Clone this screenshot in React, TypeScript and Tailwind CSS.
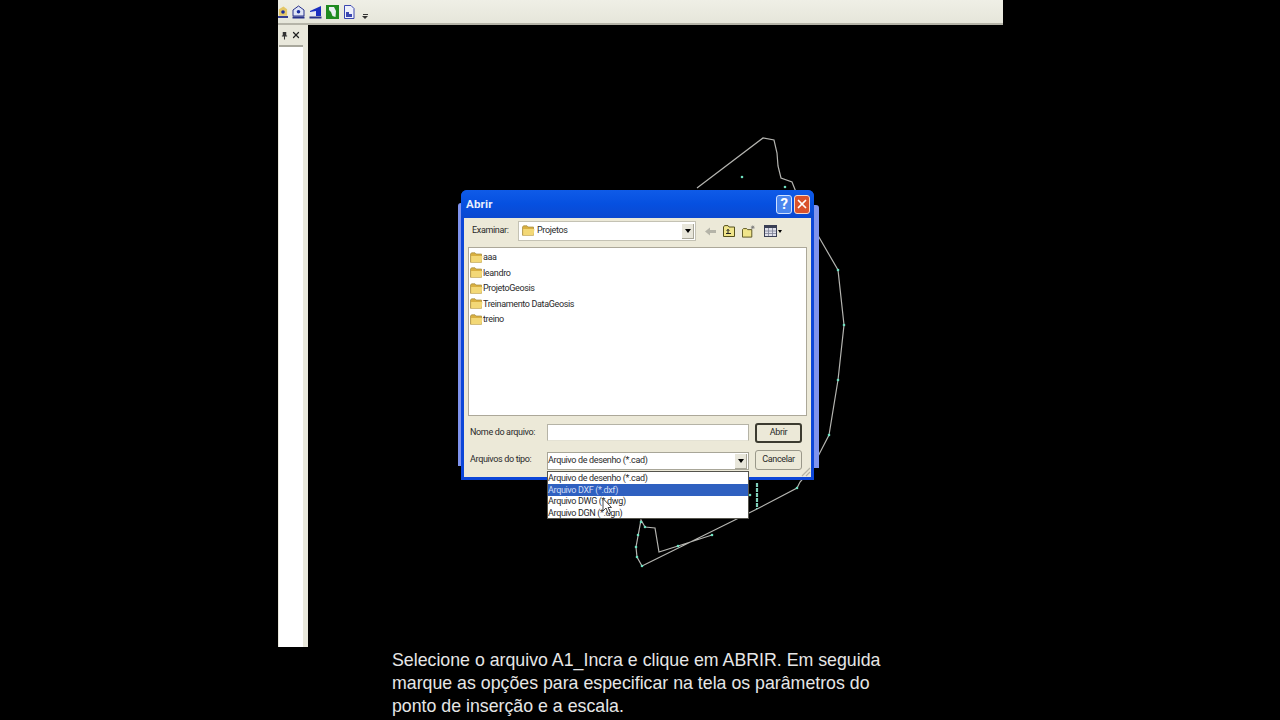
import { type FC } from "react";
import { X } from "lucide-react";

const FOLDERS = ["aaa", "leandro", "ProjetoGeosis", "Treinamento DataGeosis", "treino"];
const FILE_TYPES = ["Arquivo de desenho (*.cad)", "Arquivo DXF (*.dxf)", "Arquivo DWG (*.dwg)", "Arquivo DGN (*.dgn)"];

const LINES = [
    "697,188 763,138 774,140 777,153 778,166 781,178 792,182 796,192",
    "816,232 838,270 844,325 838,380 829,435 812,468 800,482 797,488 757,509 642,566 637,557 636,547 641,520 645,527 655,528 659,552 678,546 712,535",
];
const DOTS = [
    [742, 177],
    [785, 187],
    [838, 270],
    [844, 325],
    [838, 380],
    [829, 435],
    [797, 488],
    [750, 495],
    [642, 566],
    [637, 557],
    [636, 547],
    [638, 535],
    [641, 522],
    [645, 527],
    [678, 546],
    [712, 535],
];

const Folder: FC<{ className?: string }> = ({ className }) => (
    <svg viewBox="0 0 13 11" className={className}>
        <path d="M0.5 2 L1.5 0.8 H5 L6 2 H11.5 V10.3 H0.5 Z" fill="#d9b041" stroke="#a58a3c" strokeWidth="0.7" />
        <path d="M1.2 4 H12.5 L11.5 10.2 H1.2 Z" fill="#f3d877" />
    </svg>
);

const ComboArrow: FC = () => (
    <div className="w-[12px] h-[15px] bg-[#e8e6da] border-r border-b border-[#a8a698] flex items-center justify-center">
        <div className="w-0 h-0 border-x-[3px] border-x-transparent border-t-[4px] border-t-black" />
    </div>
);

const Toolbar: FC = () => (
    <div className="h-[25px] shrink-0 flex items-center gap-[4px] bg-gradient-to-b from-[#efefe6] to-[#e6e6da] border-b-2 border-[#b5b4a8] overflow-hidden">
        <svg viewBox="0 0 11 14" className="w-[10px] h-[14px]">
            <path d="M1 11 V4 L6 1 L10 4 V11 Z" fill="#e4c766" />
            <circle cx="5.5" cy="7" r="2" fill="#1b2f9e" />
            <rect x="0" y="11.5" width="11" height="2" fill="#26308a" />
        </svg>
        <svg viewBox="0 0 13 14" className="w-[13px] h-[14px]">
            <path d="M1 11 V5 L6.5 1 L12 5 V11 Z" fill="#dfe4f5" stroke="#26308a" />
            <circle cx="6.5" cy="6.8" r="1.8" fill="#1b2f9e" />
            <rect x="0.5" y="11.5" width="12" height="2" fill="#26308a" />
        </svg>
        <svg viewBox="0 0 13 14" className="w-[13px] h-[14px]">
            <path d="M1 11 V6 L12 1 V11 Z" fill="#1b2fc0" />
            <path d="M1 7 L7 6 V11 H1 Z" fill="#e4e6f2" />
            <rect x="0.5" y="11.5" width="12" height="2" fill="#26308a" />
        </svg>
        <svg viewBox="0 0 13 14" className="w-[13px] h-[14px]">
            <rect width="13" height="14" fill="#1f8a1f" />
            <path d="M3 2 H8 L10 6 L9.5 12 L6.5 11 L5 7 L3 5 Z" fill="#e9eef2" />
        </svg>
        <svg viewBox="0 0 12 14" className="w-[12px] h-[14px]">
            <path d="M1.5 0.5 H8 L11 3.5 V13.5 H1.5 Z" fill="#eef0fb" stroke="#3a46b0" />
            <path d="M3 7 H6 V9 H9 V12 H3 Z" fill="#3a46b0" />
        </svg>
        <div className="ml-[3px] mt-[10px] flex flex-col items-center gap-[1px]">
            <div className="w-[5px] h-[1px] bg-[#333]" />
            <div className="w-0 h-0 border-x-[3px] border-x-transparent border-t-[3px] border-t-[#333]" />
        </div>
    </div>
);

const SidePanel: FC = () => (
    <div className="w-[30px] shrink-0 flex flex-col bg-[#e9e8dc]">
        <div className="h-[20px] shrink-0 flex items-center gap-[3px] pl-[3px]">
            <svg viewBox="0 0 8 10" className="w-[7px] h-[9px]">
                <path d="M2 1 H6 V5 H7 V6 H4.6 V9.5 H3.4 V6 H1 V5 H2 Z" fill="#333" />
            </svg>
            <X className="w-[10px] h-[10px] text-[#222]" strokeWidth={3} />
        </div>
        <div className="flex-1 flex">
            <div className="ml-[1px] w-[24px] bg-white border-t-2 border-[#a9a89d]" />
        </div>
    </div>
);

const Dialog: FC = () => (
    <div className="absolute left-[153px] top-[165px] w-[353px] h-[290px] font-['Roboto',sans-serif] text-[9px] tracking-[-0.35px] text-[#2a2a2a]">
        <div className="absolute -left-[3px] top-[13px] w-[6px] h-[263px] rounded-tl-[3px] bg-[#7f93ee]" />
        <div className="absolute -right-[5px] top-[15px] w-[8px] h-[263px] rounded-tr-[3px] bg-[#7f93ee]" />
        <div className="relative h-full flex flex-col rounded-t-[6px] bg-[#0c46d8] overflow-visible">
            <div className="h-[28px] shrink-0 flex items-center justify-between pl-[5px] pr-[4px] rounded-t-[6px] bg-gradient-to-b from-[#0f5be8] via-[#0650e0] to-[#0a48d0]">
                <span className="mt-[2px] text-[11.5px] font-bold tracking-[0.2px] text-[#e8eefc]">Abrir</span>
                <div className="flex items-center gap-[2px]">
                    <div className="w-[16px] h-[19px] rounded-[3px] border border-[#cfe0ff] bg-[#4a86ee] flex items-center justify-center text-[15px] font-bold text-white">
                        ?
                    </div>
                    <div className="w-[16px] h-[19px] rounded-[3px] border border-[#f3d8cc] bg-[#d9522c] flex items-center justify-center">
                        <X className="w-[14px] h-[14px] text-white" strokeWidth={3} />
                    </div>
                </div>
            </div>
            <div className="relative flex-1 mx-[3px] mb-[3px] bg-[#ece9d8] px-[4px] pt-[3px] flex flex-col">
                <div className="flex items-center h-[20px]">
                    <span className="w-[50px] pl-[4px] whitespace-nowrap">Examinar:</span>
                    <div className="w-[178px] h-[20px] flex items-center justify-between bg-white border border-[#c4c2b4] pl-[3px] pr-[1px]">
                        <div className="flex items-center gap-[2px]">
                            <Folder className="w-[13px] h-[11px] -mt-[1px]" />
                            <span>Projetos</span>
                        </div>
                        <ComboArrow />
                    </div>
                    <div className="ml-[9px] flex items-center gap-[7px]">
                        <svg viewBox="0 0 11 9" className="w-[11px] h-[9px]">
                            <path d="M0 4.5 L5 0.5 V3 H11 V6 H5 V8.5 Z" fill="#b5b4a8" />
                        </svg>
                        <svg viewBox="0 0 12 12" className="w-[12px] h-[12px]">
                            <path d="M0.5 2 L1.5 0.6 H5 L6 2 H11.5 V11.5 H0.5 Z" fill="#f0e58a" stroke="#55501c" />
                            <path d="M3 8.5 H8 M5 8.5 V4.5 M3.7 5.8 L5 4.3 L6.3 5.8" stroke="#222" fill="none" />
                        </svg>
                        <svg viewBox="0 0 15 13" className="w-[14px] h-[13px]">
                            <path d="M0.5 4.5 L1.5 3.4 H5 L6 4.5 H10.5 V12.5 H0.5 Z" fill="#f0e58a" stroke="#55501c" />
                            <path d="M11.5 0 V4 M9.5 2 H13.5 M10 0.5 L13 3.5 M13 0.5 L10 3.5" stroke="#777" strokeWidth="0.8" />
                        </svg>
                        <div className="flex items-center gap-[1px] ml-[1px]">
                            <svg viewBox="0 0 13 12" className="w-[13px] h-[12px]">
                                <rect x="0.5" y="0.5" width="12" height="11" fill="#dfe0ea" stroke="#3a3f55" />
                                <rect x="0.5" y="0.5" width="12" height="2.5" fill="#3a3f55" />
                                <path d="M4.5 3 V11 M8.5 3 V11 M1 6 H12 M1 8.5 H12" stroke="#7b8095" strokeWidth="0.8" />
                            </svg>
                            <div className="w-0 h-0 border-x-[2.5px] border-x-transparent border-t-[3px] border-t-black" />
                        </div>
                    </div>
                </div>
                <div className="mt-[6px] h-[169px] w-[339px] bg-white border border-[#aca899] pt-[2px] pl-[1px] flex flex-col">
                    {FOLDERS.map((name) => (
                        <div key={name} className="h-[15.5px] flex items-center">
                            <Folder className="w-[13px] h-[11px] -mt-[1px]" />
                            <span>{name}</span>
                        </div>
                    ))}
                </div>
                <div className="mt-[7px] flex items-center h-[20px]">
                    <span className="w-[79px] pl-[2px] whitespace-nowrap">Nome do arquivo:</span>
                    <div className="w-[202px] h-[17px] -mt-[1px] bg-white border border-[#b5b3a6] border-b-[#e4e2d4]" />
                    <button className="ml-[6px] w-[47px] h-[20px] rounded-[3px] border-2 border-[#3c3b30] bg-[#ece9d8]">Abrir</button>
                </div>
                <div className="mt-[7px] flex items-center h-[20px]">
                    <span className="w-[79px] pl-[2px] whitespace-nowrap">Arquivos do tipo:</span>
                    <div className="w-[202px] h-[18px] mt-[2px] flex items-center justify-between bg-white border border-[#a8a698] pr-[1px]">
                        <span>{FILE_TYPES[0]}</span>
                        <ComboArrow />
                    </div>
                    <button className="ml-[6px] w-[47px] h-[20px] rounded-[3px] border border-[#9a988a] bg-[#ece9d8]">Cancelar</button>
                </div>
                <svg viewBox="0 0 12 12" className="absolute right-0 bottom-0 w-[12px] h-[12px]">
                    <path d="M11 3 L3 11 M11 7 L7 11" stroke="#b5b3a6" strokeWidth="1.2" />
                </svg>
                <div className="absolute left-[83px] top-[253px] z-10 w-[202px] h-[48px] pt-[0.5px] flex flex-col bg-white border border-[#55544c]">
                    {FILE_TYPES.map((t, i) => (
                        <div key={t} className={i === 1 ? "h-[12px] leading-[12px] bg-[#2f60c0] text-[#cfdcf5]" : "h-[11.5px] leading-[11.5px]"}>
                            {t}
                        </div>
                    ))}
                    <svg viewBox="0 0 10 18" className="absolute left-[54px] top-[26px] w-[10px] h-[18px]">
                        <path d="M1 0.5 V13 L4 10 L6.5 16 L8.5 15 L6 9.5 H9.5 Z" fill="white" stroke="#333" strokeWidth="0.9" />
                    </svg>
                </div>
            </div>
        </div>
    </div>
);

const App: FC = () => {
    return (
        <div className="relative w-[1280px] h-[720px] bg-black overflow-hidden flex flex-col">
            <div className="ml-[278px] w-[725px] h-[647px] shrink-0 flex flex-col">
                <Toolbar />
                <div className="flex-1 flex">
                    <SidePanel />
                    <div className="relative flex-1 bg-black">
                        <svg viewBox="308 25 695 622" className="absolute inset-0 w-[695px] h-[622px] overflow-visible">
                            {LINES.map((pts) => (
                                <polyline key={pts} points={pts} fill="none" stroke="#b4b4b0" strokeWidth="1.2" />
                            ))}
                            <path d="M757 483 V509" stroke="#7fd0bb" strokeWidth="2.2" strokeDasharray="4 1" />
                            {DOTS.map(([x, y]) => (
                                <circle key={`${x}-${y}`} cx={x} cy={y} r="1.3" fill="#6fe0c0" />
                            ))}
                        </svg>
                        <Dialog />
                    </div>
                </div>
            </div>
            <p className="ml-[392px] w-[520px] pt-[1.5px] text-[17.75px] leading-[23px] text-[#e6e6e6] font-['Liberation_Sans',sans-serif]">
                Selecione o arquivo A1_Incra e clique em ABRIR. Em seguida
                <br />
                marque as opções para especificar na tela os parâmetros do
                <br />
                ponto de inserção e a escala.
            </p>
        </div>
    );
};

export default App;
